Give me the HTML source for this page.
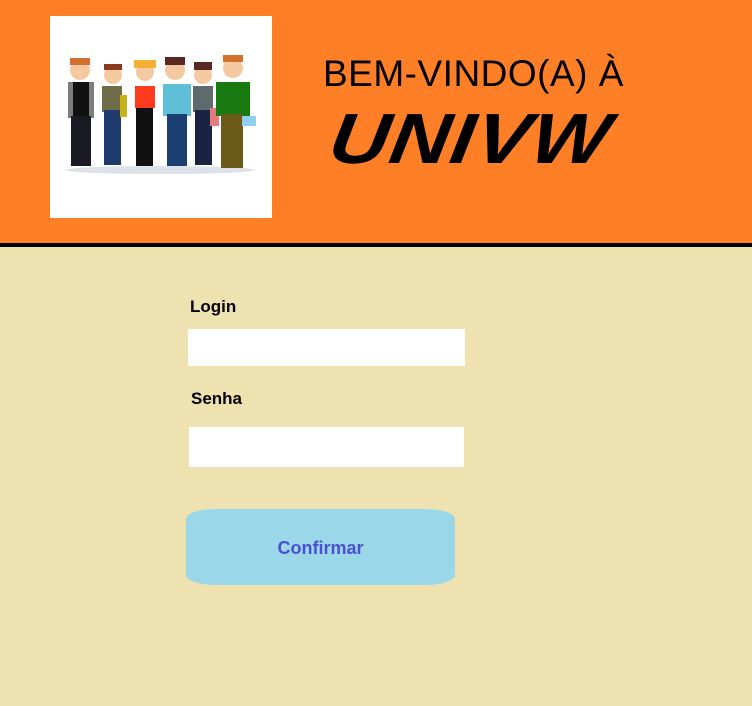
<!DOCTYPE html>
<html><head><meta charset="utf-8"><style>
body{margin:0;width:752px;height:706px;background:#efe2b1;position:relative;overflow:hidden;font-family:"Liberation Sans",sans-serif}
.hdr{position:absolute;left:0;top:0;width:752px;height:243px;background:#ff7f27}
.bar{position:absolute;left:0;top:243px;width:752px;height:4px;background:#000}
.img{position:absolute;left:50px;top:16px;width:222px;height:202px;background:#fff}
.t1{position:absolute;left:323px;top:53px;font-size:37px;color:#000;letter-spacing:0.5px;white-space:nowrap}
.t2{position:absolute;left:336px;top:104px;font-size:71px;font-weight:900;font-style:italic;color:#000;letter-spacing:1px;transform:scaleX(1.16) skewX(-8deg);transform-origin:left top;line-height:1}
.lbl{position:absolute;font-size:17px;font-weight:bold;color:#000}
.inp{position:absolute;background:#fff}
.btn{position:absolute;left:186px;top:509px;width:269px;height:76px;background:#9ad8e9;border-radius:30px/10px;color:#4b4fd0;font-size:18px;font-weight:bold;text-align:center;line-height:78px}
</style></head><body>
<div class="hdr"></div>
<div class="bar"></div>
<div class="img">
<svg width="222" height="202" viewBox="50 16 222 202">
<g>
<ellipse cx="160" cy="170" rx="95" ry="4" fill="#dde2e8"/>
<rect x="68" y="82" width="26" height="36" fill="#7d7d7d"/><rect x="73" y="82" width="16" height="34" fill="#111"/>
<rect x="71" y="116" width="20" height="50" fill="#1a1a22"/><circle cx="80" cy="70" r="10" fill="#f5c9a0"/><rect x="70" y="58" width="20" height="7" fill="#d2702e"/>
<rect x="102" y="86" width="20" height="26" fill="#6f6d48"/><rect x="104" y="110" width="17" height="55" fill="#1f3b6e"/><circle cx="113" cy="75" r="9" fill="#f5c9a0"/><rect x="104" y="64" width="18" height="6" fill="#8b3a1e"/><rect x="120" y="95" width="7" height="22" fill="#c9b11a"/>
<rect x="135" y="86" width="20" height="22" fill="#ff3b1f"/><rect x="136" y="108" width="17" height="58" fill="#111"/><circle cx="145" cy="72" r="9" fill="#f5c9a0"/><rect x="134" y="60" width="22" height="8" fill="#f4b033"/>
<rect x="163" y="84" width="28" height="32" fill="#5fbfd9"/><rect x="167" y="114" width="20" height="52" fill="#1c3f72"/><circle cx="175" cy="70" r="10" fill="#f5c9a0"/><rect x="165" y="57" width="20" height="8" fill="#5a2a22"/>
<rect x="193" y="86" width="20" height="26" fill="#5f6a6c"/><rect x="195" y="110" width="17" height="55" fill="#1a2440"/><circle cx="203" cy="75" r="9" fill="#f5c9a0"/><rect x="194" y="62" width="18" height="8" fill="#5a2a22"/><rect x="210" y="108" width="9" height="18" fill="#e57a80"/>
<rect x="216" y="82" width="34" height="34" fill="#1a7a12"/><rect x="221" y="114" width="22" height="54" fill="#6b5a18"/><circle cx="233" cy="68" r="10" fill="#f5c9a0"/><rect x="223" y="55" width="20" height="7" fill="#d2702e"/><rect x="242" y="116" width="14" height="10" fill="#8fd0f0"/>
</g></svg>
</div>
<div class="t1">BEM-VINDO(A) À</div>
<div class="t2">UNIVW</div>
<div class="lbl" style="left:190px;top:297px">Login</div>
<div class="inp" style="left:188px;top:329px;width:277px;height:37px"></div>
<div class="lbl" style="left:191px;top:389px">Senha</div>
<div class="inp" style="left:189px;top:427px;width:275px;height:40px"></div>
<div class="btn">Confirmar</div>
</body></html>
